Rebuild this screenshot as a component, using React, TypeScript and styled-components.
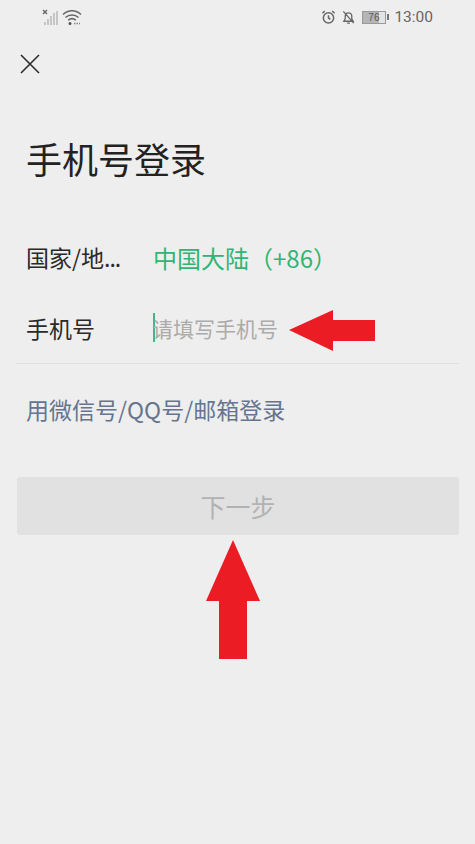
import React from 'react';
import styled, { createGlobalStyle } from 'styled-components';

const GlobalStyle = createGlobalStyle`
  html, body {
    margin: 0;
    padding: 0;
    background: #eeeeee;
  }
  * {
    box-sizing: border-box;
  }
`;

export default function App() {
  return (
    <>
      <GlobalStyle />
      <Page>
        <StatusBar>
          <StatusLeft>
            <svg width="20" height="18" viewBox="0 0 20 18">
              <path d="M2 2l4 4M6 2l-4 4" stroke="#666" strokeWidth="1.4" />
              <path d="M4 17v-3M7 17v-6M10 17v-9M13 17v-12M16 17V3" stroke="#bbb" strokeWidth="1.6" />
            </svg>
            <svg width="20" height="18" viewBox="0 0 20 18" fill="none">
              <path d="M1 6.5c5-5 13-5 18 0M3.5 9.5c3.6-3.4 9.4-3.4 13 0M6.2 12.2c2.2-1.8 5.4-1.8 7.6 0" stroke="#666" strokeWidth="1.5" />
              <circle cx="8" cy="15.5" r="1.5" fill="#555" />
              <path d="M12 15.5h6" stroke="#888" strokeWidth="1.6" strokeDasharray="1.5 1" />
            </svg>
          </StatusLeft>
          <StatusRight>
            <svg width="15" height="16" viewBox="0 0 16 16" fill="none" stroke="#666" strokeWidth="1.6">
              <circle cx="8" cy="9" r="5.5" />
              <path d="M8 6v3.2l2 1.2M1.5 4L4 1.6M14.5 4L12 1.6" />
            </svg>
            <svg width="15" height="16" viewBox="0 0 16 16" fill="none" stroke="#666" strokeWidth="1.4">
              <path d="M3 12.5h10l-1.5-2.5V7a3.5 3.5 0 0 0-7 0v3zM6.5 14.5h3M2.5 2l11 12.5" />
            </svg>
            <Battery>
              <BatteryBody>76</BatteryBody>
              <BatteryTip />
            </Battery>
            <Clock>13:00</Clock>
          </StatusRight>
        </StatusBar>

        <CloseButton>
          <svg width="20" height="20" viewBox="0 0 20 20" fill="none" stroke="#2b2b2b" strokeWidth="1.6">
            <path d="M1 1l18 18M19 1L1 19" />
          </svg>
        </CloseButton>

        <Title>手机号登录</Title>

        <Row>
          <Label>
            国家/地<Dots>...</Dots>
          </Label>
          <Region>中国大陆（+86）</Region>
        </Row>
        <PhoneRow>
          <Label>手机号</Label>
          <Caret />
          <Placeholder>请填写手机号</Placeholder>
        </PhoneRow>

        <OtherLogin>用微信号/QQ号/邮箱登录</OtherLogin>

        <NextButton>下一步</NextButton>

        <LeftArrow width="88" height="42" viewBox="0 0 88 42">
          <path d="M1 21L45 1v10h42v21H45v10z" fill="#ec1c24" />
        </LeftArrow>
        <UpArrow width="56" height="120" viewBox="0 0 56 120">
          <path d="M27 0l27 61H41v58H13V61H0z" fill="#ec1c24" />
        </UpArrow>
      </Page>
    </>
  );
}

const Page = styled.div`
  position: relative;
  width: 475px;
  height: 844px;
  overflow: hidden;
  background: #eeeeee;
  font-family: 'Noto Sans CJK SC', 'Liberation Sans', sans-serif;
`;

const StatusBar = styled.div`
  height: 36px;
  display: flex;
  align-items: center;
  justify-content: space-between;
  padding: 0 42px 2px 41px;
`;

const StatusLeft = styled.div`
  display: flex;
  align-items: center;
  gap: 1px;
`;

const StatusRight = styled.div`
  display: flex;
  align-items: center;
  gap: 5.5px;
`;

const Battery = styled.div`
  display: flex;
  align-items: center;
  gap: 1px;
`;

const BatteryBody = styled.div`
  width: 24px;
  height: 13px;
  background: linear-gradient(90deg, #b5b5b5 75%, #e4e4e4 75%);
  border: 1px solid #999;
  font-family: 'Liberation Sans', sans-serif;
  font-size: 10px;
  line-height: 11px;
  text-align: center;
  color: #555;
`;

const BatteryTip = styled.div`
  width: 2px;
  height: 6px;
  background: #777;
`;

const Clock = styled.div`
  font-family: 'Roboto', 'Liberation Sans', sans-serif;
  font-size: 15.5px;
  color: #666;
`;

const CloseButton = styled.div`
  width: 20px;
  height: 20px;
  margin: 18px 0 0 20px;
  display: flex;
`;

const Title = styled.h1`
  margin: 58px 0 0 26px;
  font-size: 36px;
  line-height: 52px;
  font-weight: 400;
  color: #222;
`;

const Row = styled.div`
  display: flex;
  align-items: center;
  height: 70px;
  margin: 38px 0 0 26px;
`;

const PhoneRow = styled(Row)`
  width: 443px;
  height: 72px;
  margin: 0 0 0 16px;
  padding-left: 10px;
  border-bottom: 1px solid #e0e0e0;
`;

const Label = styled.div`
  width: 127px;
  font-size: 23px;
  color: #2a2a2a;
  white-space: nowrap;
`;

const Dots = styled.span`
  letter-spacing: -1px;
`;

const Region = styled.div`
  font-size: 24px;
  color: #2fb574;
  white-space: nowrap;
`;

const Caret = styled.div`
  width: 2px;
  height: 29px;
  background: #3fb98a;
`;

const Placeholder = styled.div`
  margin-left: -3px;
  font-size: 21px;
  color: #ababab;
  white-space: nowrap;
`;

const OtherLogin = styled.div`
  margin: 28px 0 0 26px;
  font-size: 23px;
  line-height: 34px;
  color: #66758f;
  white-space: nowrap;
`;

const NextButton = styled.div`
  width: 442px;
  height: 58px;
  margin: 51px 0 0 17px;
  display: flex;
  align-items: center;
  justify-content: center;
  border-radius: 3px;
  background: #e1e1e1;
  font-size: 25px;
  color: #b2b2b2;
`;

const LeftArrow = styled.svg`
  position: absolute;
  left: 288px;
  top: 309px;
`;

const UpArrow = styled.svg`
  position: absolute;
  left: 206px;
  top: 540px;
`;
